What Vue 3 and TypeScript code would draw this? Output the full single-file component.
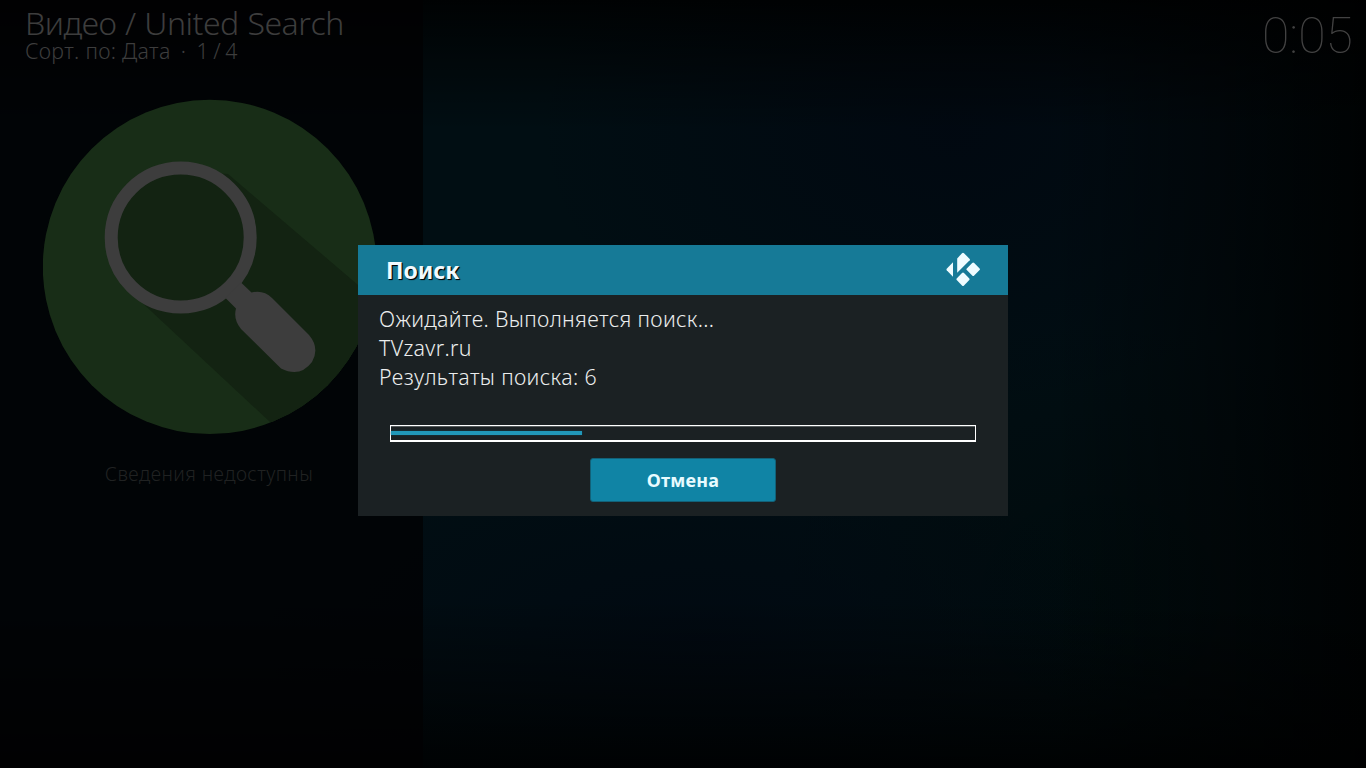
<script setup lang="ts">
import { ref, computed } from 'vue'

const title = 'Видео / United Search'
const sorting = 'Сорт. по: Дата'
const position = '1 / 4'
const clock = '0:05'
const lines = ['Ожидайте. Выполняется поиск...', 'TVzavr.ru', 'Результаты поиска: 6']
const progress = ref(32.7)
const fillWidth = computed(() => `${progress.value}%`)
</script>

<template>
  <div class="screen">
    <aside class="panel">
      <header class="heading">
        <h1 class="title">{{ title }}</h1>
        <p class="sub"><span>{{ sorting }}</span><span class="dot">·</span><span class="count">{{ position }}</span></p>
      </header>
      <svg class="art" viewBox="43 99 334 336" width="334" height="336">
        <defs>
          <clipPath id="disc"><ellipse cx="209.7" cy="266.9" rx="166.9" ry="167.2" /></clipPath>
        </defs>
        <ellipse cx="209.7" cy="266.9" rx="166.9" ry="167.2" fill="#182d17" />
        <path clip-path="url(#disc)" d="M180 170 L228 174 L358 285 L420 337 L420 500 L350 496 L269 421 L136 297 L110 240 Z" fill="#132312" />
        <circle cx="180.7" cy="237.5" r="69.5" fill="#132312" stroke="#3d3d3d" stroke-width="13" />
        <path d="M241 282.5 L251.5 292.5 Q263.5 289.5 272 298 L309 335 Q320 348 312 362 Q300 378 281 368.5 L241 329 Q233 319 236 308.5 L225.5 298 Z" fill="#3d3d3d" />
      </svg>
      <p class="info">Сведения недоступны</p>
    </aside>
    <main class="stage">
      <time class="clock">{{ clock }}</time>
    </main>

    <section class="dialog" role="dialog">
      <header class="bar">
        <h2>Поиск</h2>
        <svg class="logo" viewBox="0 0 34 36" width="34" height="36">
          <g fill="#effcff">
            <path d="M11.2 7.6 L16 2.2 Q17 1.2 18 2.2 L23.7 8 Q24.2 8.6 23.7 9.2 L11.2 21.7 Z" />
            <path d="M7 11.2 V25.8 L.7 19.2 Q.1 18.5 .7 17.8 L6.5 11.7 Z" />
            <path d="M26.2 12 Q27.2 11 28.2 12 L33.6 17.5 Q34.3 18.3 33.6 19.1 L28.2 24.5 Q27.2 25.5 26.2 24.5 L20.8 19.1 Q20 18.3 20.8 17.5 Z" />
            <path d="M16 22 Q17 21 18 22 L23.3 27.5 Q24 28.3 23.3 29.1 L18 34.6 Q17 35.6 16 34.6 L10.7 29.1 Q10 28.3 10.7 27.5 Z" />
          </g>
        </svg>
      </header>
      <div class="message">
        <p v-for="line in lines" :key="line">{{ line }}</p>
      </div>
      <div class="progress"><div class="fill" :style="{ width: fillWidth }"></div></div>
      <button class="cancel" type="button">Отмена</button>
    </section>
  </div>
</template>

<style>
html, body { margin: 0; background: #000; overflow: hidden; }
</style>

<style scoped>
.screen {
  position: relative;
  display: flex;
  width: 1366px;
  height: 768px;
  overflow: hidden;
  font-family: "Noto Sans", "Open Sans", sans-serif;
  font-kerning: none;
  background:
    linear-gradient(to bottom, rgba(0, 0, 0, .85) 0, rgba(0, 0, 0, 0) 130px, rgba(0, 0, 0, 0) 600px, rgba(0, 0, 0, .85) 768px),
    linear-gradient(to right, transparent 1050px, rgba(0, 0, 0, .85) 1366px),
    radial-gradient(ellipse 420px 280px at 950px 130px, rgba(1, 7, 16, .8), transparent),
    radial-gradient(ellipse 450px 200px at 700px 640px, rgba(1, 8, 17, .8), transparent),
    radial-gradient(ellipse 320px 280px at 1100px 600px, rgba(0, 10, 11, .8), transparent),
    #010e13;
}
h1, h2, p { margin: 0; font-weight: 300; }
.panel {
  display: flex;
  flex-direction: column;
  width: 423px;
  background: rgba(1, 1, 2, .76);
}
.heading { height: 99px; padding-left: 25px; box-sizing: border-box; color: #3d3d3d; white-space: nowrap; }
.title { height: 37px; font-size: 32px; line-height: 45px; letter-spacing: -.48px; word-spacing: .8px; }
.sub { display: flex; font-size: 21.33px; line-height: 28px; letter-spacing: .28px; }
.dot { width: 26px; text-align: center; }
.count { letter-spacing: 0; word-spacing: -1px; }
.art { display: block; margin-left: 43px; }
.info { width: 418px; margin-top: 25px; text-align: center; font-size: 19.2px; line-height: 28px; letter-spacing: .42px; color: #202222; }
.stage { flex: 1; display: flex; justify-content: flex-end; align-items: flex-start; }
.clock { margin-right: 13px; font: 100 50px/72px Roboto, sans-serif; color: #424242; }

.dialog {
  position: absolute;
  left: 358px;
  top: 245px;
  display: flex;
  flex-direction: column;
  width: 650px;
  height: 271px;
  background: #1b2123;
}
.bar {
  display: flex;
  align-items: flex-start;
  justify-content: space-between;
  height: 50px;
  padding: 0 28px;
  background: #167a97;
}
.bar h2 { font-size: 23px; font-weight: 700; line-height: 51px; color: #f0faff; text-shadow: 1px 1px 1px #000, 1px 1px 0 rgba(0, 0, 0, .7); }
.logo { margin-top: 6px; }
.message { height: 130px; padding: 9px 21px 0; box-sizing: border-box; font-size: 21.33px; line-height: 29px; letter-spacing: .33px; color: #eceeee; }
.progress {
  display: flex;
  align-items: center;
  box-sizing: border-box;
  width: 586px;
  height: 17px;
  margin-left: 32px;
  border: solid #fff;
  border-width: 1px 1px 2px;
  box-shadow: inset 0 1px 0 #555b5d;
}
.fill { height: 4px; margin-bottom: 1px; background: #2198b9; box-shadow: 0 0 2px #124654; }
.cancel {
  align-self: center;
  width: 186px;
  height: 44px;
  margin-top: 16px;
  padding: 0;
  border: 1px solid #126178;
  border-radius: 3px;
  background: #1084a5;
  color: #e7fbff;
  font: 700 18px/42px "Noto Sans", sans-serif;
  letter-spacing: .2px;
}
</style>
